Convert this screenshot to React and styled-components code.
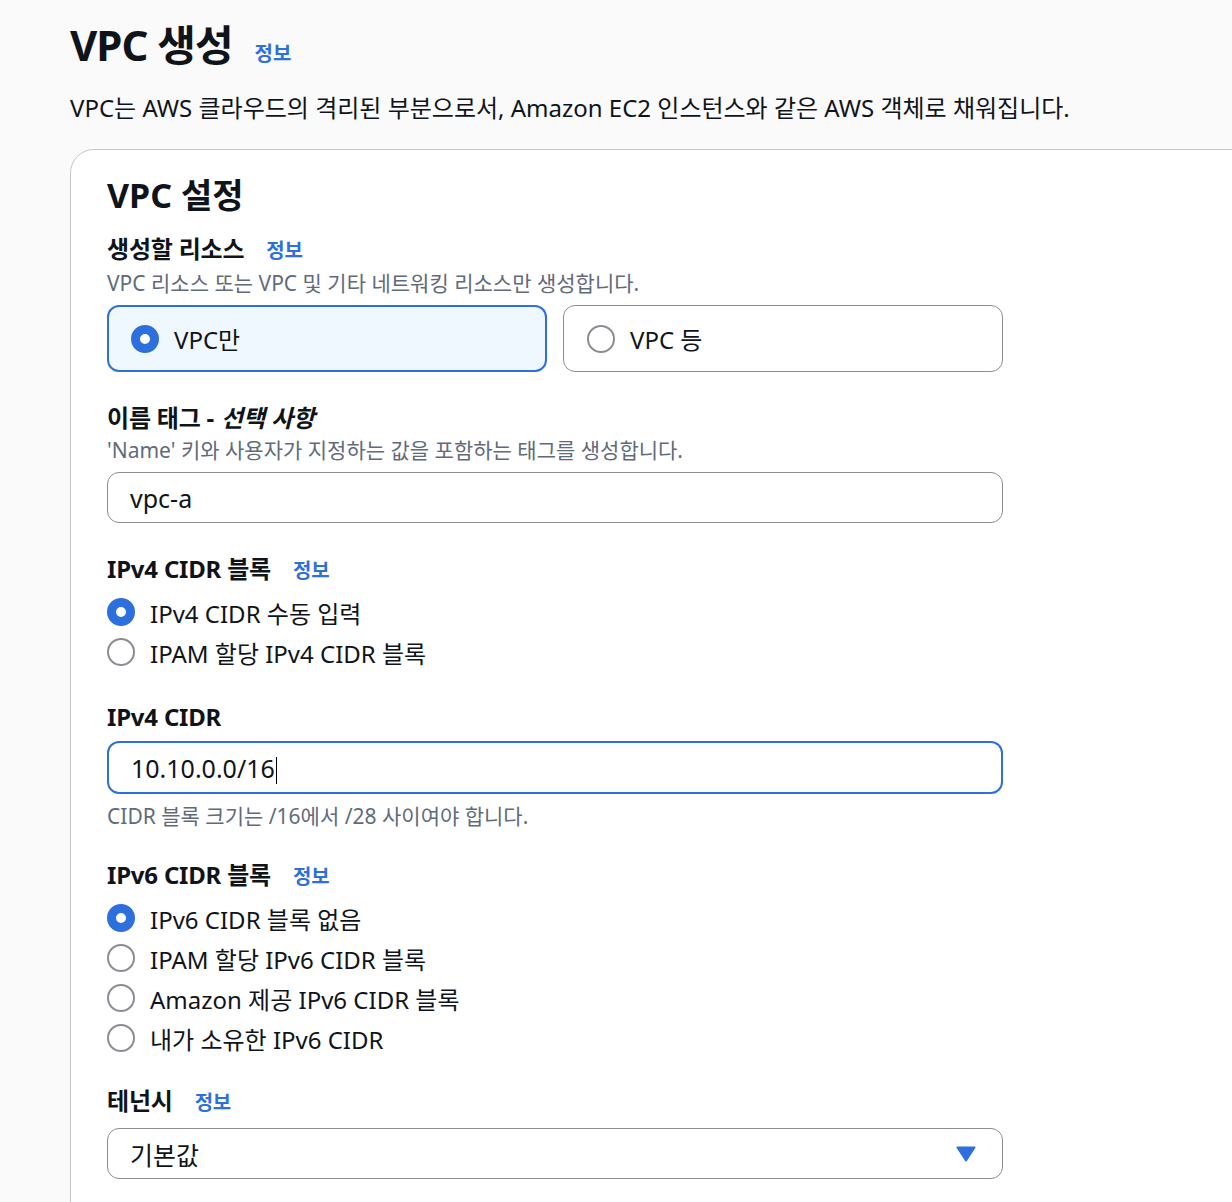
import React from "react";
import styled, { createGlobalStyle } from "styled-components";

const GlobalStyle = createGlobalStyle`
  html, body {
    margin: 0;
    padding: 0;
    background: #fafafa;
    overflow: hidden;
  }
  body {
    font-family: "Noto Sans", "Noto Sans CJK KR", sans-serif;
    color: #0f141a;
  }
`;

const Page = styled.div`
  padding: 20px 0 0 70px;
  width: 1232px;
  box-sizing: border-box;
`;

const TitleRow = styled.div`
  display: flex;
  align-items: baseline;
  gap: 22px;
`;

const Title = styled.h1`
  margin: 0;
  font-size: 42px;
  line-height: 50px;
  font-weight: 700;
  letter-spacing: -1px;
`;

const Info = styled.a`
  color: #2e6fde;
  font-size: 20px;
  font-weight: 700;
  text-decoration: none;
  margin-left: ${(p) => p.$gap || "22px"};
`;

const Lead = styled.p`
  margin: 23px 0 0;
  font-size: 24px;
  line-height: 30px;
`;

const Card = styled.section`
  margin-top: 26px;
  width: 1300px;
  min-height: 1100px;
  background: #fff;
  border: 1px solid #c6c6cd;
  border-radius: 24px;
  padding: 24px 0 0 36px;
  box-sizing: border-box;
`;

const CardTitle = styled.h2`
  margin: 0;
  font-size: 34px;
  line-height: 42px;
  font-weight: 700;
`;

const Form = styled.div`
  width: 896px;
`;

const Field = styled.div`
  margin-top: ${(p) => p.$top || "30px"};
`;

const Label = styled.div`
  display: flex;
  align-items: baseline;
  font-size: 24px;
  line-height: 30px;
  font-weight: 700;
  letter-spacing: -0.2px;
  em {
    font-style: italic;
    margin-left: 7px;
  }
`;

const Hint = styled.div`
  margin-top: ${(p) => p.$top || "4px"};
  font-size: 21px;
  line-height: 26px;
  color: #5f6b7a;
`;

const Tiles = styled.div`
  margin-top: 9px;
  display: grid;
  grid-template-columns: 1fr 1fr;
  gap: 16px;
`;

const Tile = styled.div`
  height: 67px;
  box-sizing: border-box;
  display: flex;
  align-items: center;
  gap: 15px;
  padding-left: ${(p) => (p.$on ? "22px" : "23px")};
  border-radius: 12px;
  border: ${(p) => (p.$on ? "2px solid #2e6fde" : "1px solid #8c8c94")};
  background: ${(p) => (p.$on ? "#f0f8ff" : "#fff")};
  font-size: 24px;
`;

const Radio = styled.span`
  width: 28px;
  height: 28px;
  box-sizing: border-box;
  border-radius: 50%;
  flex: none;
  border: ${(p) => (p.$on ? "9px solid #2e6fde" : "2px solid #8c8c94")};
  background: #fff;
`;

const RadioList = styled.div`
  margin-top: 6px;
`;

const RadioRow = styled.div`
  height: 40px;
  display: flex;
  align-items: center;
  gap: 15px;
  font-size: 24px;
`;

const Input = styled.div`
  margin-top: ${(p) => p.$top || "9px"};
  height: ${(p) => (p.$focus ? "53px" : "51px")};
  box-sizing: border-box;
  border-radius: 12px;
  border: ${(p) => (p.$focus ? "2px solid #2e6fde" : "1px solid #8c8c94")};
  padding-left: 22px;
  padding-right: 26px;
  display: flex;
  align-items: center;
  justify-content: space-between;
  font-size: 25px;
  background: #fff;
`;

const Caret = styled.span`
  display: inline-block;
  width: 1.5px;
  height: 27px;
  background: #000;
  vertical-align: middle;
  margin-left: 1px;
`;

const Arrow = () => (
  <svg width="20" height="16" viewBox="0 0 20 16">
    <path d="M1.5 1.5 H18.5 L10 14.5 Z" fill="#2e6fde" stroke="#2e6fde" strokeWidth="2" strokeLinejoin="round" />
  </svg>
);

export default function App() {
  return (
    <Page>
      <GlobalStyle />
      <TitleRow>
        <Title>VPC 생성</Title>
        <Info $gap="0">정보</Info>
      </TitleRow>
      <Lead>VPC는 AWS 클라우드의 격리된 부분으로서, Amazon EC2 인스턴스와 같은 AWS 객체로 채워집니다.</Lead>

      <Card>
        <CardTitle>VPC 설정</CardTitle>
        <Form>
          <Field $top="18px">
            <Label>
              생성할 리소스<Info>정보</Info>
            </Label>
            <Hint>VPC 리소스 또는 VPC 및 기타 네트워킹 리소스만 생성합니다.</Hint>
            <Tiles>
              <Tile $on>
                <Radio $on />
                VPC만
              </Tile>
              <Tile>
                <Radio />
                VPC 등
              </Tile>
            </Tiles>
          </Field>

          <Field $top="31px">
            <Label>
              이름 태그 -<em>선택 사항</em>
            </Label>
            <Hint>'Name' 키와 사용자가 지정하는 값을 포함하는 태그를 생성합니다.</Hint>
            <Input>vpc-a</Input>
          </Field>

          <Field $top="31px">
            <Label>
              IPv4 CIDR 블록<Info>정보</Info>
            </Label>
            <RadioList>
              <RadioRow>
                <Radio $on />
                IPv4 CIDR 수동 입력
              </RadioRow>
              <RadioRow>
                <Radio />
                IPAM 할당 IPv4 CIDR 블록
              </RadioRow>
            </RadioList>
          </Field>

          <Field>
            <Label>IPv4 CIDR</Label>
            <Input $focus>
              <span>
                10.10.0.0/16
                <Caret />
              </span>
            </Input>
            <Hint $top="9px">CIDR 블록 크기는 /16에서 /28 사이여야 합니다.</Hint>
          </Field>

          <Field $top="31px">
            <Label>
              IPv6 CIDR 블록<Info>정보</Info>
            </Label>
            <RadioList>
              <RadioRow>
                <Radio $on />
                IPv6 CIDR 블록 없음
              </RadioRow>
              <RadioRow>
                <Radio />
                IPAM 할당 IPv6 CIDR 블록
              </RadioRow>
              <RadioRow>
                <Radio />
                Amazon 제공 IPv6 CIDR 블록
              </RadioRow>
              <RadioRow>
                <Radio />
                내가 소유한 IPv6 CIDR
              </RadioRow>
            </RadioList>
          </Field>

          <Field $top="28px">
            <Label>
              테넌시<Info>정보</Info>
            </Label>
            <Input $top="10px">
              기본값
              <Arrow />
            </Input>
          </Field>
        </Form>
      </Card>
    </Page>
  );
}
